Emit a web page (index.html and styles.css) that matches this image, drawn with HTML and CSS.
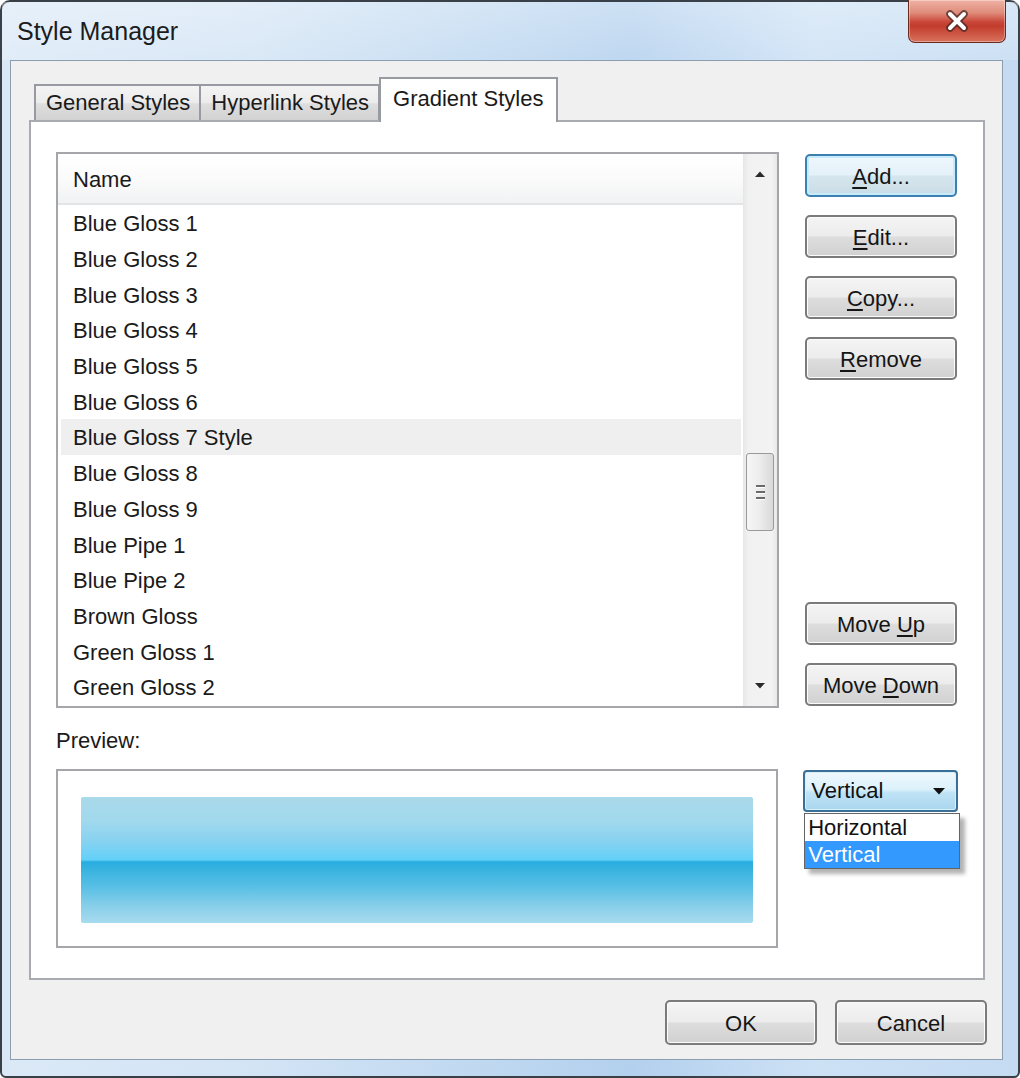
FILE: index.html
```html
<!DOCTYPE html>
<html>
<head>
<meta charset="utf-8">
<title>Style Manager</title>
<link rel="stylesheet" href="styles.css">
</head>
<body>
<div class="window">
  <div class="titlebar">
    <span class="title">Style Manager</span>
    <div class="close">
      <svg width="26" height="24" viewBox="0 0 26 24">
        <path d="M6 5 L20 19 M20 5 L6 19" stroke="#3b2420" stroke-width="7.5" stroke-linecap="round" fill="none" opacity="0.7"/>
        <path d="M6 5 L20 19 M20 5 L6 19" stroke="#ffffff" stroke-width="4" stroke-linecap="round" fill="none"/>
      </svg>
    </div>
  </div>
  <div class="client">
    <div class="tabs">
      <div class="tab first">General Styles</div>
      <div class="tab">Hyperlink Styles</div>
      <div class="tab active">Gradient Styles</div>
    </div>
    <div class="panel">
      <div class="main">
        <div class="list">
          <div class="list-body">
            <div class="list-header">Name</div>
            <div class="row">Blue Gloss 1</div>
            <div class="row">Blue Gloss 2</div>
            <div class="row">Blue Gloss 3</div>
            <div class="row">Blue Gloss 4</div>
            <div class="row">Blue Gloss 5</div>
            <div class="row">Blue Gloss 6</div>
            <div class="row selected">Blue Gloss 7 Style</div>
            <div class="row">Blue Gloss 8</div>
            <div class="row">Blue Gloss 9</div>
            <div class="row">Blue Pipe 1</div>
            <div class="row">Blue Pipe 2</div>
            <div class="row">Brown Gloss</div>
            <div class="row">Green Gloss 1</div>
            <div class="row">Green Gloss 2</div>
          </div>
          <div class="scrollbar">
            <div class="sb-arrow">
              <svg width="12" height="8" viewBox="0 0 12 8"><path d="M1 7 L6 1.5 L11 7 Z" fill="#2a2a2a"/></svg>
            </div>
            <div class="sb-track">
              <div class="thumb">
                <div class="grip"><span></span><span></span><span></span></div>
              </div>
            </div>
            <div class="sb-arrow">
              <svg width="12" height="8" viewBox="0 0 12 8"><path d="M1 1 L11 1 L6 6.5 Z" fill="#2a2a2a"/></svg>
            </div>
          </div>
        </div>
        <div class="side">
          <div class="btn focused"><span><u>A</u>dd...</span></div>
          <div class="btn"><span><u>E</u>dit...</span></div>
          <div class="btn"><span><u>C</u>opy...</span></div>
          <div class="btn"><span><u>R</u>emove</span></div>
          <div class="spacer"></div>
          <div class="btn"><span>Move <u>U</u>p</span></div>
          <div class="btn"><span>Move <u>D</u>own</span></div>
        </div>
      </div>
      <div class="preview-label">Preview:</div>
      <div class="preview-row">
        <div class="preview-box"><div class="gradient"></div></div>
        <div class="combo-wrap">
          <div class="combo">
            <span>Vertical</span>
            <svg width="14" height="8" viewBox="0 0 14 8"><path d="M1 1 L13 1 L7 7.5 Z" fill="#111"/></svg>
          </div>
          <div class="dropdown">
            <div class="opt">Horizontal</div>
            <div class="opt sel">Vertical</div>
          </div>
        </div>
      </div>
    </div>
    <div class="footer">
      <div class="btn big"><span>OK</span></div>
      <div class="btn big"><span>Cancel</span></div>
    </div>
  </div>
</div>
</body>
</html>
```
FILE: styles.css
```css
* { box-sizing: border-box; }
html, body { margin: 0; padding: 0; }
body {
  width: 1020px;
  height: 1078px;
  overflow: hidden;
  background: #ffffff;
  font-family: "Liberation Sans", Arial, sans-serif;
  font-size: 22px;
  color: #1a1a1a;
}

.window {
  width: 1020px;
  height: 1078px;
  border: 2px solid #3a4048;
  border-radius: 10px 10px 6px 6px;
  background:
    linear-gradient(90deg, #dbe9f7 0%, #d3e4f5 25%, #bdd7f0 50%, #b3d0ee 62%, #cde1f5 80%, #c4dbf2 100%);
  display: flex;
  flex-direction: column;
}

.titlebar {
  height: 58px;
  flex: none;
  display: flex;
  align-items: flex-start;
  padding-left: 15px;
  background: linear-gradient(180deg, rgba(255,255,255,0.35) 0%, rgba(255,255,255,0.15) 100%);
}
.title {
  font-size: 25px;
  margin-top: 15px;
  color: #1c1c1c;
}
.close {
  margin-left: auto;
  margin-right: 12px;
  margin-top: -2px;
  width: 98px;
  height: 43px;
  border: 1px solid #6a2a20;
  border-top: none;
  border-radius: 0 0 7px 7px;
  background: linear-gradient(180deg, #eeb2a4 0%, #e08d7b 30%, #c9473a 52%, #c23c2c 62%, #d8725c 100%);
  box-shadow: inset 0 0 0 1px rgba(255,255,255,0.35);
  display: flex;
  align-items: center;
  justify-content: center;
}

.client {
  flex: 1;
  margin: 0 15px 16px 8px;
  border: 1px solid #8c9db0;
  background: #f0f0f0;
  padding: 16px 17px 14px 18px;
  display: flex;
  flex-direction: column;
}

.tabs {
  height: 43px;
  display: flex;
  align-items: flex-end;
  padding-left: 5px;
  position: relative;
  z-index: 1;
}
.tab {
  height: 36px;
  padding: 0 9px 0 10px;
  display: flex;
  align-items: center;
  border: 2px solid #979aa0;
  border-bottom: none;
  border-left: none;
  background: linear-gradient(180deg, #f4f4f4 0%, #ebebeb 50%, #dedede 52%, #d2d2d2 100%);
  color: #1a1a1a;
}
.tab.first { border-left: 2px solid #979aa0; }
.tab.active {
  height: 45px;
  margin-bottom: -2px;
  margin-left: -1px;
  padding: 0 13px 4px 12px;
  border-left: 2px solid #979aa0;
  background: #ffffff;
}

.panel {
  flex: 1;
  border: 2px solid #a8abb0;
  background: #ffffff;
  padding: 30px 25px 30px 25px;
  display: flex;
  flex-direction: column;
}

.main {
  display: flex;
  gap: 26px;
  height: 556px;
}

.list {
  width: 723px;
  height: 556px;
  border: 2px solid #a4a6aa;
  display: flex;
  background: #ffffff;
}
.list-body {
  flex: 1;
  display: flex;
  flex-direction: column;
}
.list-header {
  height: 51px;
  padding-left: 15px;
  padding-top: 3px;
  display: flex;
  align-items: center;
  background: linear-gradient(180deg, #ffffff 0%, #fbfbfb 50%, #f1f2f3 100%);
  border-bottom: 2px solid #e3e4e6;
}
.row {
  height: 35.7px;
  padding-left: 15px;
  padding-top: 3px;
  display: flex;
  align-items: center;
}
.row.selected {
  background: #efefef;
  margin-left: 3px;
  padding-left: 12px;
  margin-right: 2px;
}

.scrollbar {
  width: 34px;
  display: flex;
  flex-direction: column;
  background: linear-gradient(90deg, #e6e6e6 0%, #f1f1f1 15%, #f3f3f3 85%, #e8e8e8 100%);
}
.sb-arrow {
  height: 40px;
  display: flex;
  align-items: center;
  justify-content: center;
}
.sb-track {
  flex: 1;
  padding: 0 3px;
}
.thumb {
  margin-top: 259px;
  height: 78px;
  border: 1px solid #9a9a9a;
  border-radius: 3px;
  background: linear-gradient(90deg, #f6f6f6 0%, #ececec 50%, #d9d9d9 100%);
  display: flex;
  align-items: center;
  justify-content: center;
}
.grip {
  display: flex;
  flex-direction: column;
  gap: 3px;
}
.grip span {
  display: block;
  width: 9px;
  height: 3px;
  background: #6a6a6a;
  border-bottom: 1px solid #ffffff;
}

.side {
  width: 152px;
  display: flex;
  flex-direction: column;
  gap: 18px;
  padding: 2px 0 2px 0;
}
.spacer { flex: 1; }

.btn {
  width: 152px;
  height: 43px;
  flex: none;
  border: 2px solid #7b7b7b;
  border-radius: 5px;
  background: linear-gradient(180deg, #f4f4f4 0%, #ececec 48%, #dddddd 52%, #d1d1d1 100%);
  box-shadow: inset 0 0 0 1px #fbfbfb;
  display: flex;
  align-items: center;
  justify-content: center;
  padding-top: 2px;
  color: #151515;
}
.btn.focused {
  border-color: #3c7fb1;
  background: linear-gradient(180deg, #eef7fc 0%, #e4f1f8 48%, #d6e6ee 52%, #c9dce6 100%);
  box-shadow: inset 0 0 0 2px #c6ecfb;
}
.btn.big { height: 45px; }
.btn u { text-underline-offset: 3px; text-decoration-thickness: 2px; }

.preview-label {
  margin-top: 20px;
  height: 26px;
  line-height: 26px;
}

.preview-row {
  margin-top: 15px;
  display: flex;
  gap: 25px;
}
.preview-box {
  width: 723px;
  height: 179px;
  border: 2px solid #a4a6aa;
  padding: 26px 23px 23px 23px;
}
.gradient {
  height: 100%;
  border-radius: 2px;
  background: linear-gradient(180deg,
    #a9d9ea 0%,
    #a2d9ed 18%,
    #88d2f0 35%,
    #62d0f8 50%,
    #27ade0 51.5%,
    #34b2df 56%,
    #5ac0e5 72%,
    #86cee9 86%,
    #a8dbee 100%);
}

.combo-wrap {
  position: relative;
  width: 155px;
}
.combo {
  margin-top: 1px;
  height: 42px;
  border: 2px solid #3a6f98;
  border-radius: 4px;
  background: linear-gradient(180deg, #eef8fd 0%, #ddf1fb 45%, #bfe3f5 55%, #a9d6ef 100%);
  box-shadow: inset 0 0 0 1px #d7f1fc;
  display: flex;
  align-items: center;
  justify-content: space-between;
  padding: 0 10px 0 6px;
  color: #111;
}
.dropdown {
  position: absolute;
  top: 44px;
  left: 1px;
  width: 156px;
  border: 1px solid #646464;
  background: #ffffff;
  box-shadow: 5px 5px 4px rgba(0,0,0,0.3);
  z-index: 5;
}
.opt {
  height: 27px;
  padding-left: 3px;
  display: flex;
  align-items: center;
  color: #111;
}
.opt.sel {
  background: #3399ff;
  color: #ffffff;
}

.footer {
  margin-top: 20px;
  display: flex;
  justify-content: flex-end;
  gap: 18px;
  margin-right: -2px;
}
```
